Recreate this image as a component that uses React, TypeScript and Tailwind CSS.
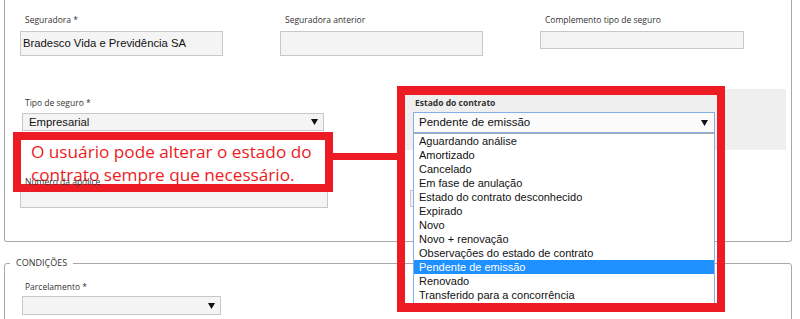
import React from "react";

const Arrow = () => (
  <svg width="7" height="6" viewBox="0 0 7 6" className="shrink-0">
    <polygon points="0,0 7,0 3.5,6" fill="#111" />
  </svg>
);

const options = [
  "Aguardando análise",
  "Amortizado",
  "Cancelado",
  "Em fase de anulação",
  "Estado do contrato desconhecido",
  "Expirado",
  "Novo",
  "Novo + renovação",
  "Observações do estado de contrato",
  "Pendente de emissão",
  "Renovado",
  "Transferido para a concorrência",
];

const labelCls = "h-[12px] leading-[12px] text-[8.5px] text-[#333] font-['Open_Sans',sans-serif]";
const inputCls = "border border-[#c8c8c8] bg-[#f4f4f4] font-['Liberation_Sans',Arial,sans-serif] text-[11.3px] text-[#111]";

export default function App() {
  return (
    <div className="relative w-[800px] h-[319px] overflow-hidden bg-white">
      {/* Fieldset 1 */}
      <div className="ml-[4px] w-[788px] h-[242px] border-x border-b border-[#a8a8a8] rounded-b-[3px]">
        {/* Row 1 */}
        <div className="flex pl-[15px] pt-[14px]">
          <div className="w-[260px]">
            <div className={`${labelCls} pl-[5px]`}>Seguradora *</div>
            <div className={`${inputCls} mt-[5px] w-[203px] h-[25px] flex items-center pl-[2px]`}>
              Bradesco Vida e Previdência SA
            </div>
          </div>
          <div className="w-[260px]">
            <div className={`${labelCls} pl-[5px]`}>Seguradora anterior</div>
            <div className={`${inputCls} mt-[5px] w-[203px] h-[25px]`} />
          </div>
          <div className="w-[240px]">
            <div className={`${labelCls} pl-[5px]`}>Complemento tipo de seguro</div>
            <div className={`${inputCls} mt-[5px] w-[204px] h-[18px]`} />
          </div>
        </div>
        {/* Row 2 */}
        <div className="flex pl-[15px] mt-[33px]">
          <div className="w-[382px] pt-[8px]">
            <div className={`${labelCls} pl-[5px]`}>Tipo de seguro *</div>
            <div className={`${inputCls} ml-[2px] mt-[4px] w-[302px] h-[18px] flex items-center justify-between pl-[6px] pr-[5px]`}>
              <span>Empresarial</span>
              <Arrow />
            </div>
          </div>
          <div className="w-[384px] h-[61px] bg-[#efefef] pl-[11px] pt-[8px]">
            <div className={`${labelCls} pl-[2px] font-bold text-[#222]`}>Estado do contrato</div>
            <div className="mt-[3px] w-[302px] h-[21px] border border-[#86aee6] bg-[#fbfbfb] flex items-center justify-between pl-[5px] pr-[6px] font-['Liberation_Sans',Arial,sans-serif] text-[11.5px] text-[#111]">
              <span>Pendente de emissão</span>
              <Arrow />
            </div>
          </div>
        </div>
        {/* Row 3 */}
        <div className="flex pl-[15px] mt-[26px]">
          <div className="w-[390px]">
            <div className={`${labelCls} pl-[5px] relative z-30`}>Número da apólice</div>
            <div className={`${inputCls} mt-[3px] w-[308px] h-[17px]`} />
          </div>
          <div className="w-[310px]">
            <div className={`${labelCls} pl-[5px]`}>&nbsp;</div>
            <div className={`${inputCls} mt-[2px] w-[304px] h-[17px]`} />
          </div>
        </div>
      </div>

      {/* Fieldset 2 */}
      <fieldset className="mt-[15px] ml-[4px] w-[788px] h-[90px] border border-[#a8a8a8] rounded-[3px] pl-[5px]">
        <legend className="px-[6px] h-[12px] leading-[12px] text-[9px] text-[#333] font-['Open_Sans',sans-serif]">
          CONDIÇÕES
        </legend>
        <div className="pl-[10px] mt-[12px]">
          <div className={`${labelCls} pl-[5px]`}>Parcelamento *</div>
          <div className={`${inputCls} ml-[2px] mt-[3px] w-[199px] h-[19px] flex items-center justify-end pr-[5px]`}>
            <Arrow />
          </div>
        </div>
      </fieldset>

      {/* Dropdown list overlay */}
      <div className="absolute left-[413px] top-[133px] w-[302px] h-[172px] z-10 bg-white border border-[#86aee6] border-t-[#aaaaaa] font-['Liberation_Sans',Arial,sans-serif] text-[11px] text-[#111]">
        {options.map((o) => (
          <div
            key={o}
            className={
              o === "Pendente de emissão"
                ? "h-[14px] leading-[14px] pl-[5px] bg-[#1e90ff] text-white"
                : "h-[14px] leading-[14px] pl-[5px]"
            }
          >
            {o}
          </div>
        ))}
      </div>

      {/* Callout box */}
      <div className="absolute left-[13px] top-[132px] w-[320px] h-[60px] z-20 border-[8px] border-[#ed1c24] bg-white pl-[10px] font-['Open_Sans',sans-serif] text-[17.2px] leading-[23px] text-[#ed1c24]">
        <div>O usuário pode alterar o estado do</div>
        <div>contrato sempre que necessário.</div>
      </div>

      {/* Connector */}
      <div className="absolute left-[333px] top-[153px] w-[64px] h-[7px] z-20 bg-[#ed1c24]" />

      {/* Highlight frame */}
      <div className="absolute left-[397px] top-[86px] w-[328px] h-[226px] z-20 border-[8px] border-t-[9px] border-b-[9px] border-[#ed1c24]" />
    </div>
  );
}
